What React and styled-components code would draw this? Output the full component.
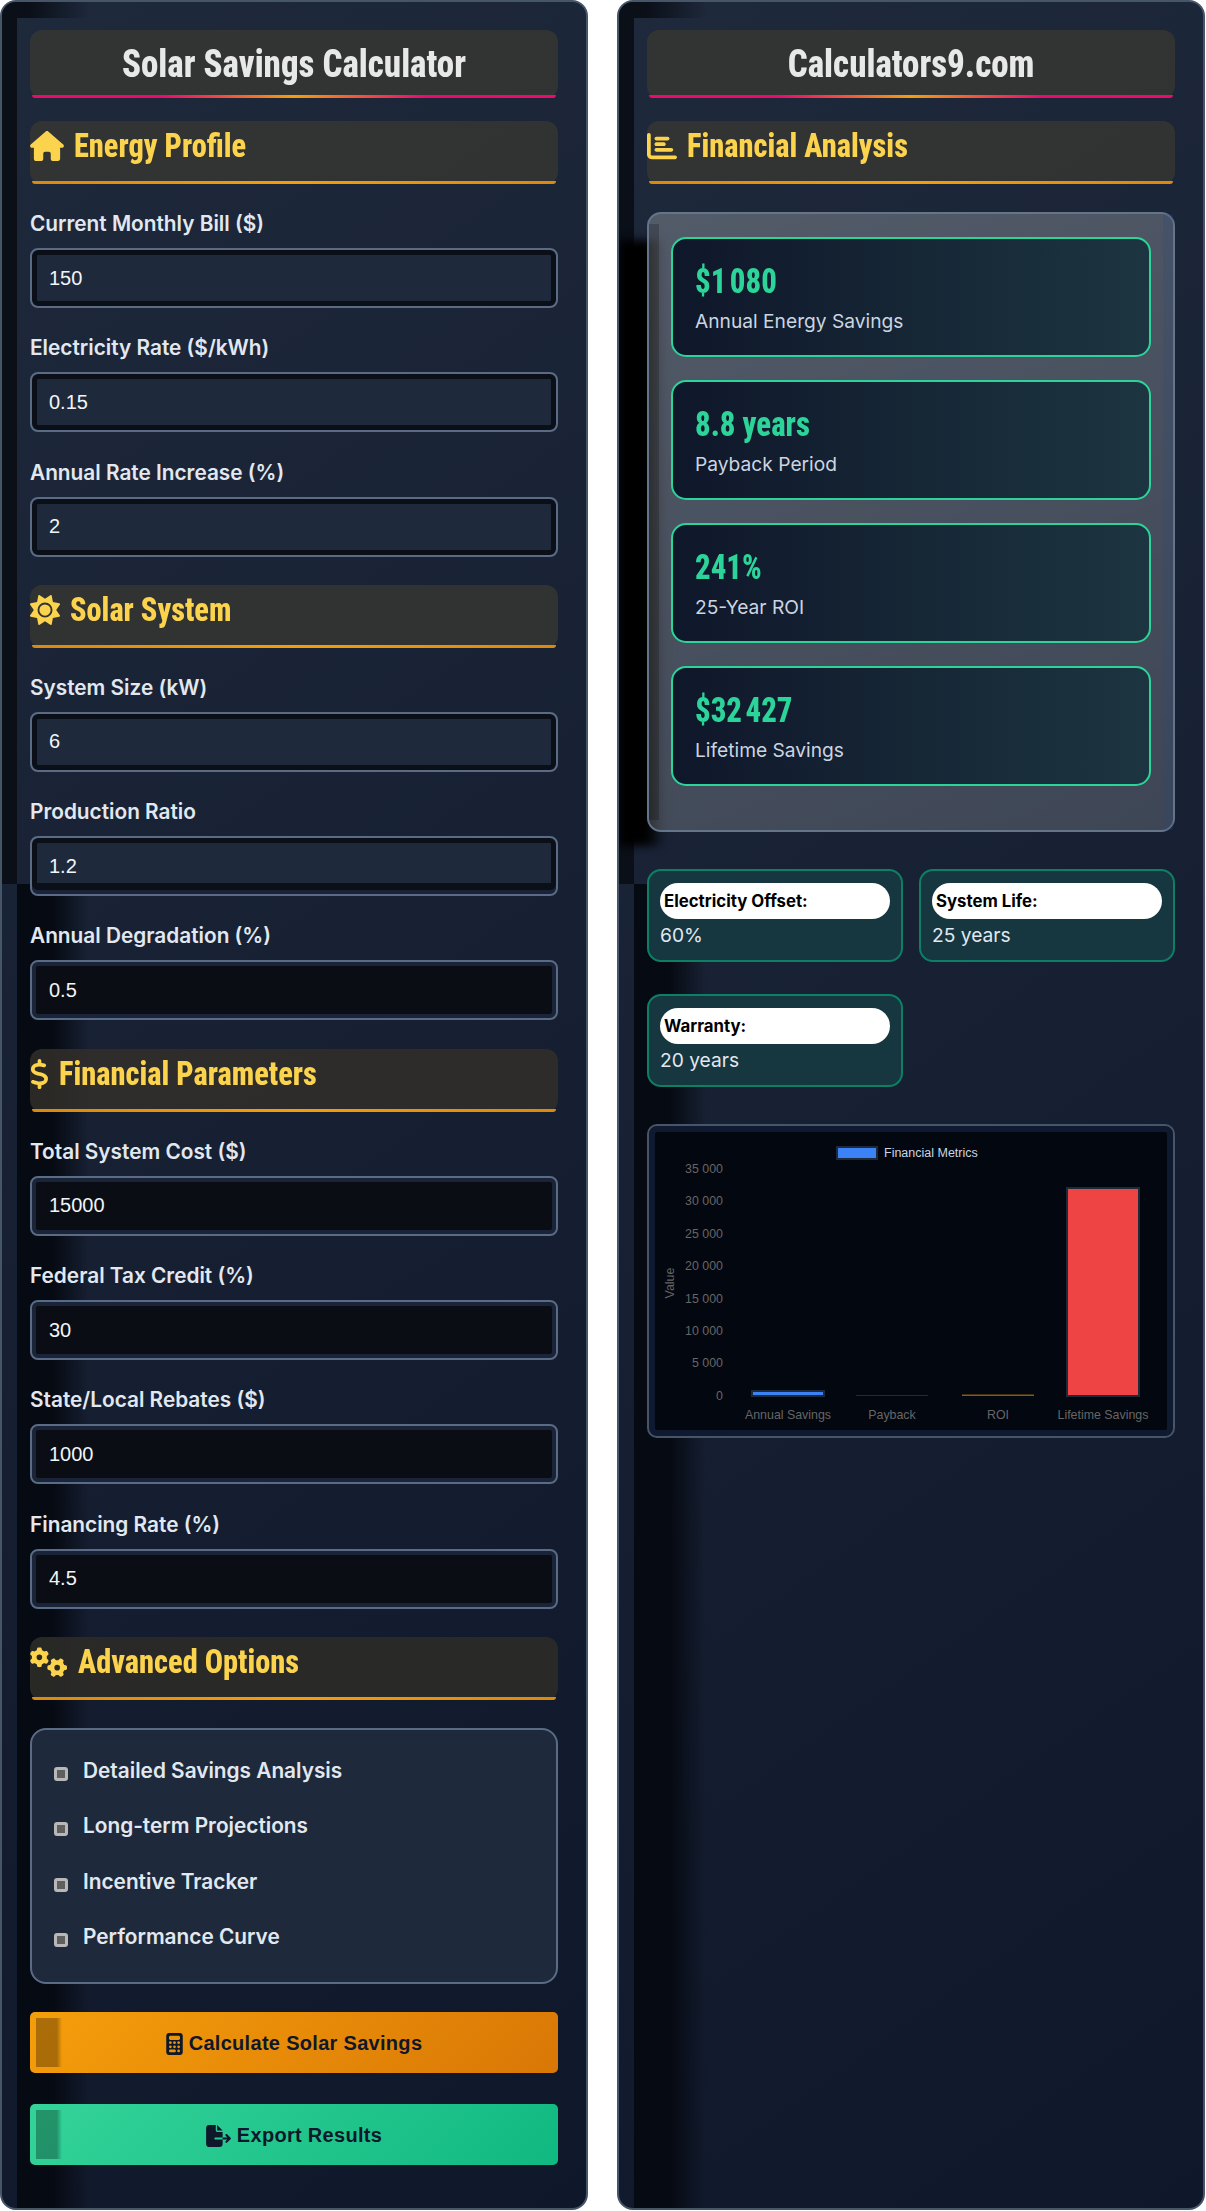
import React from "react";
import styled, { createGlobalStyle } from "styled-components";
import { FaHouse, FaSun, FaDollarSign, FaGears, FaChartBar, FaCalculator, FaFileExport } from "react-icons/fa6";

const GlobalStyle = createGlobalStyle`
  * { box-sizing: border-box; }
  body {
    margin: 0;
    background: #fff;
    font-family: Inter, "Liberation Sans", sans-serif;
  }
`;

const Page = styled.div`
  display: grid;
  grid-template-columns: 588px 588px;
  gap: 29px;
  height: 2210px;
`;

const Panel = styled.section`
  position: relative;
  overflow: hidden;
  padding: 28px;
  background: linear-gradient(145deg, #1e293b, #0f172a);
  border: 2px solid #475569;
  border-radius: 16px;
`;

const TopShade = styled.div`
  position: absolute;
  top: 0;
  left: 0;
  width: 88px;
  height: 16px;
  background: linear-gradient(90deg, #0a0f18 30%, transparent);
`;

const SideShade = styled.div`
  position: absolute;
  top: 16px;
  left: 0;
  width: 15px;
  height: 866px;
  background: #0a0f18;
`;

const LowerShade = styled.div`
  position: absolute;
  top: 882px;
  bottom: 0;
  left: 15px;
  width: 72px;
  background: linear-gradient(90deg, #060a12 50%, transparent);
`;

const ResultShade = styled.div`
  position: absolute;
  top: 238px;
  left: 0;
  width: 46px;
  height: 606px;
  background: linear-gradient(90deg, #000 60%, transparent);
  filter: blur(4px);
`;

const Content = styled.div`
  position: relative;
  z-index: 1;
`;

const Narrow = styled.span`
  display: inline-block;
  font-stretch: 75%;
  transform: scaleX(${p => p.$x});
  transform-origin: ${p => p.$origin || "left"};
  white-space: nowrap;
`;

const TitleBox = styled.h1`
  position: relative;
  margin: 0 0 23px;
  padding: 12px 0 12px;
  background: rgba(58, 56, 50, 0.75);
  border-radius: 12px;
  color: #e8e8e8;
  font: 800 38px/44px Roboto, sans-serif;
  text-align: center;

  &::after {
    content: "";
    position: absolute;
    left: 2px;
    right: 2px;
    bottom: 0;
    height: 3px;
    border-radius: 0 0 8px 8px;
    background: linear-gradient(90deg, #ec0a6e 25%, #f59e0b 50%, #ec0a6e 75%);
  }
`;

const SectionHead = styled.h2`
  position: relative;
  display: flex;
  align-items: center;
  gap: 10px;
  height: 63px;
  margin: 0 0 28px;
  padding: 7px 0 20px;
  background: ${p => p.$bg || "rgba(58, 56, 50, 0.75)"};
  border-radius: 12px;
  color: #fcd34d;
  font: 800 33px/36px Roboto, sans-serif;

  svg {
    flex: none;
    width: ${p => p.$icon}px;
    height: 30px;
  }

  &::after {
    content: "";
    position: absolute;
    left: 2px;
    right: 2px;
    bottom: 0;
    height: 3px;
    border-radius: 0 0 8px 8px;
    background: linear-gradient(90deg, #d98a0c, #f59e0b 50%, #d98a0c);
  }
`;

const Field = styled.div`
  margin-bottom: 28.3px;
`;

const Label = styled.label`
  display: block;
  height: 36px;
  color: #e2e8f0;
  font: 600 20.8px/24px Inter, sans-serif;
`;

const inputFill = p => {
  if (p.$tone === "dark") return "#0a0e14";
  if (p.$tone === "seam") return "linear-gradient(#1e293b 45px, #0a0f18 45px)";
  return "#1e293b";
};

const inputRing = p => {
  if (p.$tone === "dark") return "inset 0 0 0 4px #1a2438";
  if (p.$tone === "seam") return "inset 0 -4px 0 #1a2438, inset 0 0 0 5px #0a0f18";
  return "inset 0 0 0 5px #0a0f18";
};

const NumberInput = styled.input`
  display: block;
  width: 100%;
  height: 60px;
  padding: 0 17px;
  background: ${inputFill};
  border: 2px solid #5b6b85;
  border-radius: 8px;
  box-shadow: ${inputRing};
  color: #f1f5f9;
  font: 400 20px "Liberation Sans", Arial, sans-serif;
  outline: none;
`;

const OptionsBox = styled.div`
  display: flex;
  flex-direction: column;
  gap: 26.5px;
  margin-bottom: 28px;
  padding: 26px 22px 31px;
  background: #1e293b;
  border: 2px solid #5b6b85;
  border-radius: 16px;
`;

const Option = styled.label`
  display: flex;
  align-items: flex-start;
  gap: 15px;
  height: 29px;
  color: #e2e8f0;
  font: 600 20.8px/29px Inter, sans-serif;
`;

const Tick = styled.input`
  appearance: none;
  flex: none;
  width: 14px;
  height: 14px;
  margin: 11px 0 0;
  background: #5f5f5f;
  border: 3px solid #b8b8b8;
  border-radius: 3px;
`;

const ActionButton = styled.button`
  position: relative;
  display: flex;
  align-items: center;
  justify-content: center;
  gap: 6px;
  width: 100%;
  height: 61px;
  margin-bottom: 31px;
  padding: 2px 0 0;
  background: ${p => p.$bg};
  border: none;
  border-radius: 5px;
  color: #0f172a;
  font: 700 20px "Liberation Sans", Arial, sans-serif;
  letter-spacing: 0.3px;

  svg {
    width: ${p => p.$icon}px;
    height: 22px;
  }

  &::before {
    content: "";
    position: absolute;
    top: 6px;
    bottom: 6px;
    left: 6px;
    width: 26px;
    background: linear-gradient(90deg, rgba(0, 0, 0, 0.3) 80%, transparent);
  }
`;

const ResultsBox = styled.div`
  position: relative;
  margin: 1px 0 37px;
  padding: 23px 22px 21px;
  background: linear-gradient(160deg, rgba(255, 255, 255, 0.24), rgba(255, 255, 255, 0.17));
  border: 2px solid #64748b;
  border-radius: 14px;

  &::before {
    content: "";
    position: absolute;
    top: 10px;
    bottom: 10px;
    left: 0;
    width: 10px;
    background: rgba(0, 0, 0, 0.2);
  }

  &::after {
    content: "";
    position: absolute;
    top: 0;
    bottom: 0;
    right: 0;
    width: 10px;
    background: rgba(40, 70, 120, 0.2);
  }
`;

const ResultCard = styled.div`
  position: relative;
  z-index: 1;
  height: 120px;
  margin-bottom: 23px;
  padding: 23px 22px 0;
  background: linear-gradient(90deg, #0f172a, #1c3540);
  border: 2px solid #2dd49a;
  border-radius: 15px;
`;

const ResultValue = styled.div`
  color: #2dd49a;
  font: 800 35px/40px Roboto, sans-serif;
`;

const ResultLabel = styled.div`
  margin-top: 6px;
  color: #cbd5e1;
  font: 400 19.2px/26px Inter, sans-serif;
`;

const StatGrid = styled.div`
  display: grid;
  grid-template-columns: 1fr 1fr;
  gap: 32px 16px;
  margin-bottom: 37px;
`;

const StatCard = styled.div`
  height: 93px;
  padding: 12px 11px 0;
  background: #163640;
  border: 2px solid #0d7f64;
  border-radius: 14px;
`;

const StatName = styled.strong`
  display: block;
  height: 36px;
  padding: 0 4px;
  background: #fff;
  border-radius: 18px;
  color: #000;
  font: 700 16.8px/36px Inter, sans-serif;
`;

const StatValue = styled.div`
  margin-top: 3px;
  color: #e2e8f0;
  font: 400 19.2px/26px Inter, sans-serif;
`;

const ChartBox = styled.div`
  height: 314px;
  background: #03070f;
  border: 2px solid #475569;
  border-radius: 10px;
  box-shadow: inset 0 0 0 6px #0f1a30;
  overflow: hidden;

  svg {
    display: block;
  }
`;

const fields = {
  energy: [
    ["Current Monthly Bill ($)", "150"],
    ["Electricity Rate ($/kWh)", "0.15"],
    ["Annual Rate Increase (%)", "2"],
  ],
  solar: [
    ["System Size (kW)", "6"],
    ["Production Ratio", "1.2", "seam"],
    ["Annual Degradation (%)", "0.5", "dark"],
  ],
  money: [
    ["Total System Cost ($)", "15000", "dark"],
    ["Federal Tax Credit (%)", "30", "dark"],
    ["State/Local Rebates ($)", "1000", "dark"],
    ["Financing Rate (%)", "4.5", "dark"],
  ],
};

const options = ["Detailed Savings Analysis", "Long-term Projections", "Incentive Tracker", "Performance Curve"];

const results = [
  ["$1\u202f080", "Annual Energy Savings"],
  ["8.8 years", "Payback Period"],
  ["241%", "25-Year ROI"],
  ["$32\u202f427", "Lifetime Savings"],
];

const stats = [
  ["Electricity Offset:", "60%"],
  ["System Life:", "25 years"],
  ["Warranty:", "20 years"],
];

const ticks = ["35 000", "30 000", "25 000", "20 000", "15 000", "10 000", "5 000", "0"];

const bars = [
  { name: "Annual Savings", x: 103, w: 72, top: 265, fill: "#3b82f6", stroke: "#1e293b" },
  { name: "Payback", x: 207, w: 72, top: 269, fill: "#14303a" },
  { name: "ROI", x: 313, w: 72, top: 268.5, fill: "#8a5a10" },
  { name: "Lifetime Savings", x: 418, w: 72, top: 62, fill: "#ef4444", stroke: "#1e293b" },
];

const Fields = ({ items }) =>
  items.map(([label, value, tone]) => (
    <Field key={label}>
      <Label>{label}</Label>
      <NumberInput type="number" defaultValue={value} $tone={tone} />
    </Field>
  ));

const Shades = () => (
  <>
    <TopShade />
    <SideShade />
    <LowerShade />
  </>
);

const Chart = () => (
  <svg width="524" height="310" viewBox="0 0 524 310" fontFamily="Liberation Sans, Arial, sans-serif" fontSize="12.4">
    <rect x="188" y="21" width="40" height="12" fill="#3b82f6" stroke="#1e293b" strokeWidth="2" />
    <text x="235" y="31" fill="#cbd5e1" fontSize="12.5">Financial Metrics</text>
    {ticks.map((t, i) => (
      <text key={t} x="74" y={47 + i * 32.4} textAnchor="end" fill="#666">{t}</text>
    ))}
    <text transform="translate(25 157) rotate(-90)" textAnchor="middle" fill="#666">Value</text>
    {bars.map(b => (
      <g key={b.name}>
        <rect x={b.x} y={b.top} width={b.w} height={270 - b.top} fill={b.fill} stroke={b.stroke} strokeWidth="2" />
        <text x={b.x + b.w / 2} y="293" textAnchor="middle" fill="#666">{b.name}</text>
      </g>
    ))}
  </svg>
);

export default function App() {
  return (
    <Page>
      <GlobalStyle />
      <Panel>
        <Shades />
        <Content>
          <TitleBox><Narrow $x={0.92} $origin="center">Solar Savings Calculator</Narrow></TitleBox>
          <SectionHead $icon={34}><FaHouse /><Narrow $x={0.92}>Energy Profile</Narrow></SectionHead>
          <Fields items={fields.energy} />
          <SectionHead $icon={30}><FaSun /><Narrow $x={0.92}>Solar System</Narrow></SectionHead>
          <Fields items={fields.solar} />
          <SectionHead $icon={19} $bg="rgba(50, 47, 42, 0.85)"><FaDollarSign /><Narrow $x={0.92}>Financial Parameters</Narrow></SectionHead>
          <Fields items={fields.money} />
          <SectionHead $icon={37.5} $bg="rgba(44, 43, 40, 0.9)"><FaGears /><Narrow $x={0.92}>Advanced Options</Narrow></SectionHead>
          <OptionsBox>
            {options.map(o => (
              <Option key={o}>
                <Tick type="checkbox" />
                {o}
              </Option>
            ))}
          </OptionsBox>
          <ActionButton $icon={17} $bg="linear-gradient(135deg, #f59e0b, #d97706)"><FaCalculator />Calculate Solar Savings</ActionButton>
          <ActionButton $icon={25} $bg="linear-gradient(135deg, #34d399, #10b981)"><FaFileExport />Export Results</ActionButton>
        </Content>
      </Panel>
      <Panel>
        <Shades />
        <ResultShade />
        <Content>
          <TitleBox><Narrow $x={0.92} $origin="center">Calculators9.com</Narrow></TitleBox>
          <SectionHead $icon={30}><FaChartBar /><Narrow $x={0.92}>Financial Analysis</Narrow></SectionHead>
          <ResultsBox>
            {results.map(([value, label]) => (
              <ResultCard key={label}>
                <ResultValue><Narrow $x={0.88}>{value}</Narrow></ResultValue>
                <ResultLabel>{label}</ResultLabel>
              </ResultCard>
            ))}
          </ResultsBox>
          <StatGrid>
            {stats.map(([name, value]) => (
              <StatCard key={name}>
                <StatName>{name}</StatName>
                <StatValue>{value}</StatValue>
              </StatCard>
            ))}
          </StatGrid>
          <ChartBox><Chart /></ChartBox>
        </Content>
      </Panel>
    </Page>
  );
}
